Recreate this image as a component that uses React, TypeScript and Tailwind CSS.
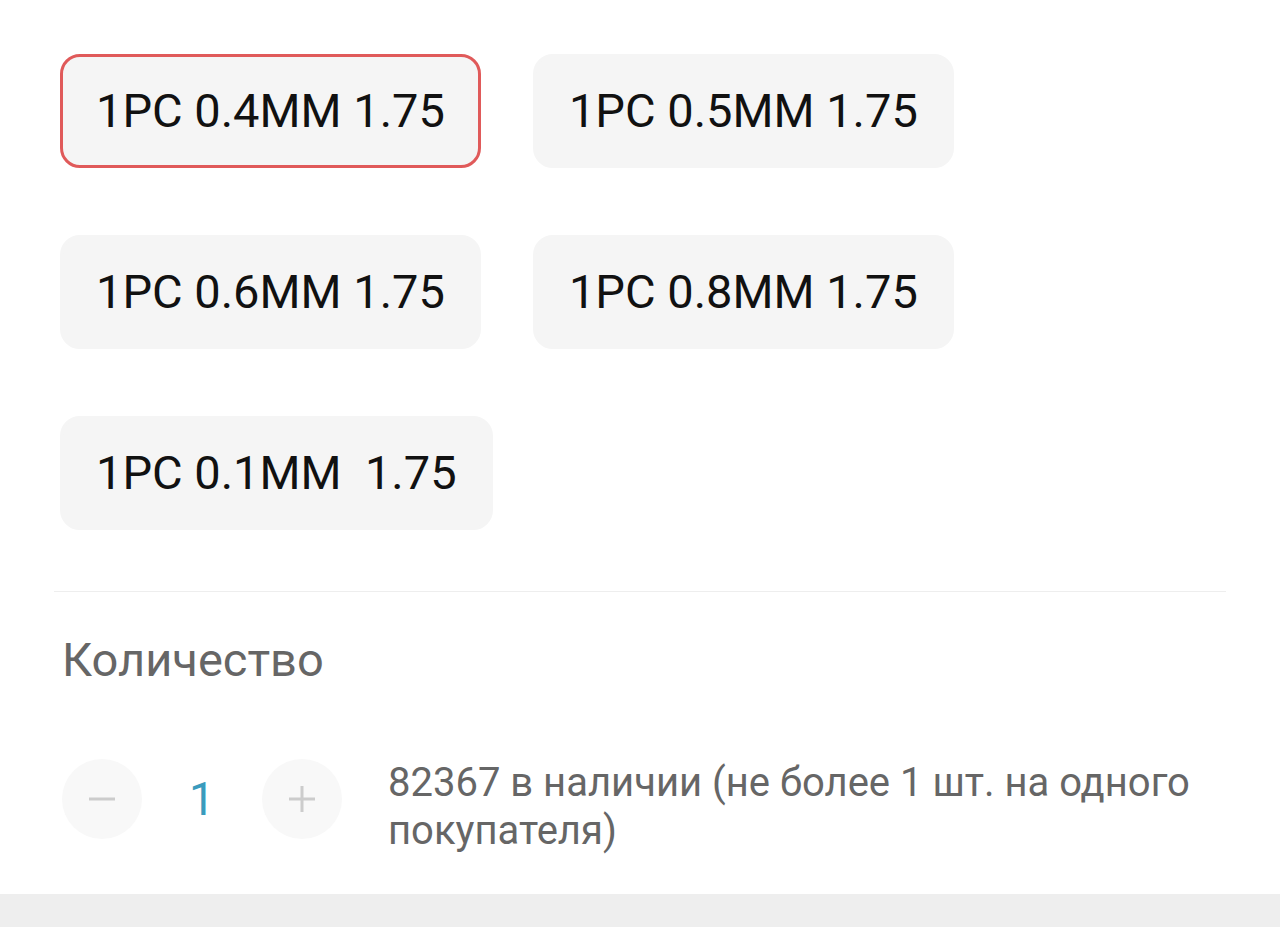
import { useState } from "react";

const options = [
  "1PC 0.4MM 1.75",
  "1PC 0.5MM 1.75",
  "1PC 0.6MM 1.75",
  "1PC 0.8MM 1.75",
  "1PC 0.1MM  1.75",
];

export default function App() {
  const [selected, setSelected] = useState(0);
  const [qty] = useState(1);

  return (
    <div className="min-h-[931px] w-[1280px] bg-white font-['Roboto',sans-serif]">
      <div className="pl-[60px] pr-[54px] pt-[54px]">
        {/* Variant chips */}
        <div className="flex w-[1000px] flex-wrap gap-x-[52px] gap-y-[67px]">
          {options.map((opt, i) => (
            <button
              key={opt}
              onClick={() => setSelected(i)}
              className={
                "whitespace-pre rounded-[20px] border-[3px] bg-[#f5f5f5] px-[33px] py-[25px] text-[47px] leading-[58px] text-[#111] " +
                (i === selected ? "border-[#e05a5a]" : "border-[#f5f5f5]")
              }
            >
              {opt}
            </button>
          ))}
        </div>
      </div>

      <div className="mx-[54px] mt-[61px] h-px bg-[#eeeeee]" />

      <div className="pl-[62px] pr-[54px]">
        <div className="mt-[40px] text-[47px] leading-[56px] text-[#666]">Количество</div>

        {/* Quantity row */}
        <div className="mt-[71px] flex items-start">
          <div className="flex items-center">
            <button className="flex h-[80px] w-[80px] items-center justify-center rounded-full bg-[#f8f8f8]">
              <svg width="26" height="26" viewBox="0 0 26 26">
                <path d="M0 13h26" stroke="#cccccc" strokeWidth="3" />
              </svg>
            </button>
            <div className="w-[120px] text-center text-[46px] leading-[56px] text-[#3a9bbd]">{qty}</div>
            <button className="flex h-[80px] w-[80px] items-center justify-center rounded-full bg-[#f8f8f8]">
              <svg width="26" height="26" viewBox="0 0 26 26">
                <path d="M0 13h26M13 0v26" stroke="#cccccc" strokeWidth="3" />
              </svg>
            </button>
          </div>
          <div className="ml-[46px] w-[820px] text-[40px] leading-[48px] text-[#666]">
            82367 в наличии (не более 1 шт. на одного покупателя)
          </div>
        </div>
      </div>

      <div className="mt-[39px] h-[33px] bg-[#eeeeee]" />
    </div>
  );
}
